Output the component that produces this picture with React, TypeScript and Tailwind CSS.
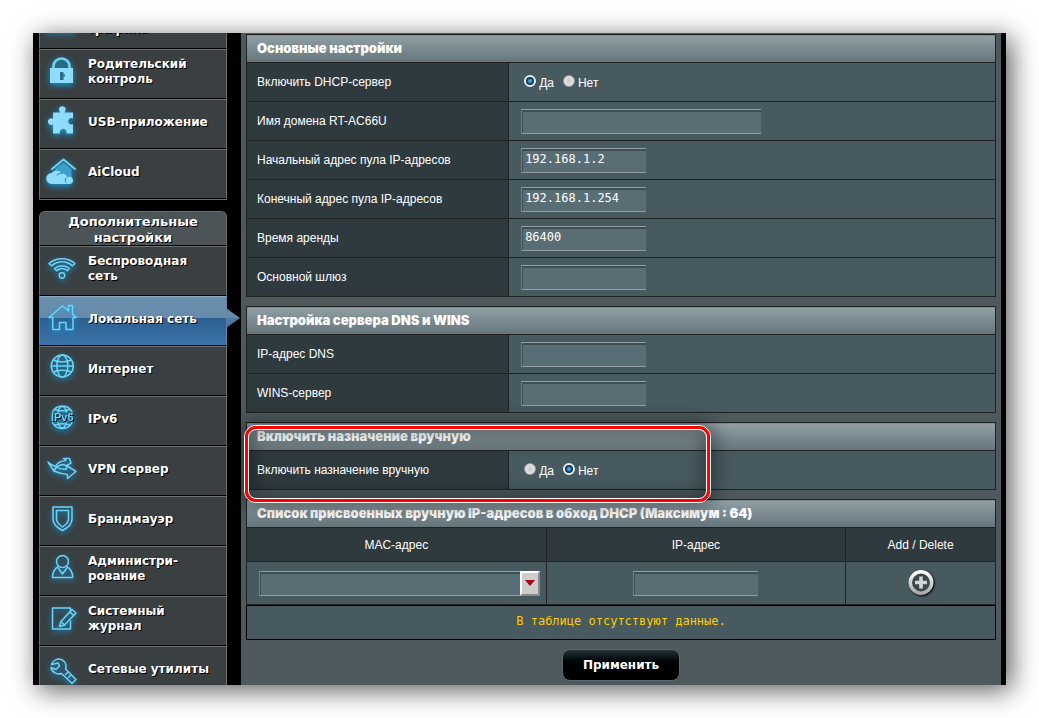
import { FC, ReactNode, useState } from 'react';

interface MenuEntry {
    label: string[];
    icon: ReactNode;
    active?: boolean;
}

const Glyph: FC<{ children: ReactNode; solid?: boolean }> = ({ children, solid }) => (
    <svg
        viewBox="0 0 36 36"
        className="w-9 h-9 shrink-0 overflow-visible drop-shadow-[0_2px_3px_#0f9ad6]"
        fill={solid ? '#8fdcfa' : 'none'}
        stroke={solid ? 'none' : '#6fd3f7'}
        strokeWidth={1.5}
        strokeLinejoin="round"
        strokeLinecap="round"
        aria-hidden="true"
    >
        {children}
    </svg>
);

const GENERAL_MENU: MenuEntry[] = [
    {
        label: ['\u00a0', 'трафика'],
        icon: (
            <Glyph solid>
                <path d="M4 18h5v10H4zM11 10h5v18h-5zM18 14h5v14h-5zM25 6h5v22h-5z" fill="#2a7fa5" />
            </Glyph>
        ),
    },
    {
        label: ['Родительский', 'контроль'],
        icon: (
            <Glyph solid>
                <path d="M9.500 14V12a8 7.500 0 0 1 16 0V14" fill="#2b6a84" stroke="#6fd3f7" strokeWidth="2.600" />
                <path d="M6 14H29V29H6Z" />
                <path d="M16 18h3.500v2.500H21v2h-1.500V26H16Z" fill="#2a6d8b" />
            </Glyph>
        ),
    },
    {
        label: ['USB-приложение'],
        icon: (
            <Glyph solid>
                <path d="M9 8.500H16.200C15.500 7.600 15 6.500 15 5.500a3.300 3.300 0 0 1 6.600 0c0 1-.5 2.100-1.200 3H29V14.500a3.200 3.200 0 1 0 0 5.500V29.500H22.200a3.300 3.300 0 1 0-6 0H9V20.500a3.300 3.300 0 1 1 0-5.600Z" />
            </Glyph>
        ),
    },
    {
        label: ['AiCloud'],
        icon: (
            <Glyph solid>
                <path d="M19.500 8.500L27.500 15V25H11V15Z" fill="#3d9fc9" />
                <path d="M8 15L19.500 5.500L31 15" fill="none" stroke="#6fd3f7" strokeWidth="2" />
                <path d="M8 30a5.500 5.500 0 0 1-.5-11 6 6 0 0 1 5-2.500c3 0 4 1.500 5 3 4 0 6 2.500 5.500 4a3.700 3.700 0 1 1 3 6.500Z" />
                <path d="M13 21c1.500-1.500 3-1.500 4.500-1.500M22 24c-1 1.500-1 3 0 4.500" fill="none" stroke="#2a7fa5" strokeWidth="1" />
            </Glyph>
        ),
    },
];

const ADVANCED_MENU: MenuEntry[] = [
    {
        label: ['Беспроводная', 'сеть'],
        icon: (
            <Glyph>
                <path d="M5 12.500C12 6 24 6 31 12.500L28.500 14.800C22 9.500 14 9.500 7.500 14.800Z" />
                <path d="M10.500 17.500C15 13.800 21 13.800 25.500 17.500L23.300 19.700C20 17 16 17 12.700 19.700Z" />
                <circle cx="18" cy="24.500" r="2.700" />
            </Glyph>
        ),
    },
    {
        label: ['Локальная сеть'],
        active: true,
        icon: (
            <Glyph>
                <path d="M8.700 16.500H5L18.300 5L24.500 10V4.500H28.500V13.200L32.500 16.500H29V28.500H22V21.500H15.500V28.500H8.700Z" />
            </Glyph>
        ),
    },
    {
        label: ['Интернет'],
        icon: (
            <Glyph>
                <circle cx="18.300" cy="15" r="11" />
                <ellipse cx="18.300" cy="15" rx="5.500" ry="11" />
                <path d="M7.500 15H29.100M9.500 9C14 11.500 22.500 11.500 27.100 9M9.500 21C14 18.500 22.500 18.500 27.100 21" />
            </Glyph>
        ),
    },
    {
        label: ['IPv6'],
        icon: (
            <Glyph>
                <path d="M8.500 11A11 11 0 0 1 28.100 11M8.500 21.500A11 11 0 0 0 28.100 21.500M14 11C15 7.500 16.500 5.500 18.300 5.500S21.600 7.500 22.600 11M14 21.500C15 25 16.500 27 18.300 27S21.600 25 22.600 21.500M11 8.500C15 10 21.600 10 25.600 8.500M11 24C15 22.500 21.600 22.500 25.600 24" />
                <text
                    x="18.300"
                    y="20"
                    textAnchor="middle"
                    fontSize="11"
                    className="font-['Liberation_Sans'] font-bold"
                    fill="#6fd3f7"
                    stroke="none"
                >
                    IPv6
                </text>
            </Glyph>
        ),
    },
    {
        label: ['VPN сервер'],
        icon: (
            <Glyph>
                <path d="M4 11L10 20C12 15.500 15 13.500 20 13.500L22 15L27 12L25.500 7.500L19.500 7.500L22 9.500C16 10 13 12 11.500 15.500C9 14.500 6 13 4 11Z" />
                <path d="M12.500 16C16 18.500 19 18.500 22.500 18V14.500L32 20.500L23.500 27.500V23.500C17 23 13.500 21.500 10 20" />
            </Glyph>
        ),
    },
    {
        label: ['Брандмауэр'],
        icon: (
            <Glyph>
                <path d="M9 6H28V18C28 23 23.500 27 18.500 29.500C13.500 27 9 23 9 18Z" />
                <path d="M12.500 9.500H24.500V18C24.500 21 21.500 24 18.500 26C15.500 24 12.500 21 12.500 18Z" />
            </Glyph>
        ),
    },
    {
        label: ['Администри-', 'рование'],
        icon: (
            <Glyph>
                <path d="M14.500 15.500C10.500 17.500 8.500 21 8.500 26.500H28.700C28.700 21 26.500 17.500 22.500 15.500" />
                <circle cx="18.500" cy="10.500" r="6" />
                <path d="M14.500 17.500L18.500 23L22.500 17.500" />
            </Glyph>
        ),
    },
    {
        label: ['Системный', 'журнал'],
        icon: (
            <Glyph>
                <path d="M26.500 20V28H8.500V7H26.500V9.500" />
                <path d="M15.500 25.500L17 20.500L28 8.500L32 12L20.500 24Z" />
                <path d="M17 20.500L20.500 24M25.800 10.800L29.500 14.500" />
            </Glyph>
        ),
    },
    {
        label: ['Сетевые утилиты'],
        icon: (
            <Glyph>
                <path d="M10.500 9.500C14 7 19 8 21 11.500C22.200 13.500 22.300 16 21.500 18L32 28.500L28 32.500L17.500 22.500C13 24 8 21.500 7 16.500L12 18.500L15.500 15L14 12L7.500 13.500C8 12 9 10.500 10.500 9.500Z" />
                <path d="M21.500 23.500L23.500 21.500M24.500 26.500L26.500 24.500" />
            </Glyph>
        ),
    },
];

const MenuItem: FC<MenuEntry> = ({ label, icon, active }) => (
    <li
        className={`relative h-[50px] border-x border-t border-b border-b-black ${
            active
                ? 'border-x-[#5b86ab] border-t-[#8aa9c2] bg-linear-to-b from-[#6d91b0] via-[#2d6090] via-45% to-[#3b74aa]'
                : 'border-x-[#6b7071] border-t-[#6b7071] bg-[#3a3f41]'
        }`}
    >
        {active && <span className="absolute inset-x-0 top-0 h-[21px] bg-linear-to-b from-[#6b8fae] to-[#668bab]" />}
        <a
            href="#"
            className="relative flex h-full items-center gap-2 pl-1 pb-1 text-xs leading-[15px] font-bold text-white [text-shadow:1px_1px_0_#000]"
        >
            {icon}
            <span className="whitespace-nowrap">
                {label.map(line => (
                    <span key={line} className="block">{line}</span>
                ))}
            </span>
        </a>
        {active && (
            <svg viewBox="0 0 14 20" className="absolute left-full top-[11px] h-5 w-3.5" aria-hidden="true">
                <path d="M0 0L14 10H0Z" fill="#668bab" />
                <path d="M0 20L14 10H0Z" fill="#4f7ba3" />
            </svg>
        )}
    </li>
);

const FIELD =
    "h-[25px] border-y border-l border-y-[#929ea1] border-l-[#6f7d82] bg-[#596d74] px-[3px] pb-0.5 font-['DejaVu_Sans_Mono',monospace] text-xs text-white shadow-[inset_1px_2px_0_#3f4e53] outline-none";

const TextField: FC<{ id: string; value?: string; wide?: boolean; label?: string }> = ({ id, value = '', wide, label }) => (
    <input
        id={id}
        type="text"
        defaultValue={value}
        aria-label={label}
        className={`${FIELD} block ${wide ? 'w-60' : 'w-[125px]'}`}
    />
);

const YesNo: FC<{ name: string; initial: boolean }> = ({ name, initial }) => {
    const [value, setValue] = useState(initial);

    return (
        <div className="flex items-center gap-[9px] pl-[3px]">
            {[true, false].map(option => (
                <label key={String(option)} className="flex items-center gap-[3px]">
                    <input
                        type="radio"
                        name={name}
                        checked={value === option}
                        onChange={() => setValue(option)}
                        className="mb-[3px] size-3 appearance-none rounded-full border border-[#8e979a] bg-radial from-[#c9c9c9] to-[#f4f4f4] checked:border-2 checked:border-[#e8eef0] checked:from-[#4fb8ee] checked:from-10% checked:to-[#0b2c4c] checked:to-60%"
                    />
                    <span className="pt-0.5">{option ? 'Да' : 'Нет'}</span>
                </label>
            ))}
        </div>
    );
};

const Heading: FC<{ children: ReactNode; span: number }> = ({ children, span }) => (
    <thead>
        <tr>
            <th
                colSpan={span}
                className="h-7 border border-[#222] bg-linear-to-b from-[#91a0a5] to-[#64757b] px-2.5 pb-0.5 text-left font-['Inter',sans-serif] text-[13px] leading-4 font-black"
            >
                {children}
            </th>
        </tr>
    </thead>
);

const Section: FC<{ title: string; children: ReactNode }> = ({ title, children }) => (
    <table className="w-full table-fixed border-collapse">
        <colgroup>
            <col className="w-[35%]" />
            <col />
        </colgroup>
        <Heading span={2}>{title}</Heading>
        <tbody>{children}</tbody>
    </table>
);

const Row: FC<{ label: string; htmlFor?: string; children: ReactNode }> = ({ label, htmlFor, children }) => (
    <tr>
        <th scope="row" className="h-[39px] border border-[#222] bg-[#2f3a3e] p-0 px-2.5 text-left font-normal">
            {htmlFor ? <label htmlFor={htmlFor}>{label}</label> : label}
        </th>
        <td className="border border-[#222] bg-[#475a5f] p-0 pl-3">{children}</td>
    </tr>
);

const ReservationTable: FC = () => (
    <div>
        <table className="w-full table-fixed border-collapse text-center">
            <colgroup>
                <col className="w-[40%]" />
                <col className="w-[40%]" />
                <col className="w-[20%]" />
            </colgroup>
            <Heading span={3}>Список присвоенных вручную IP-адресов в обход DHCP (Максимум : 64)</Heading>
            <tbody>
                <tr className="bg-[#2f3a3e]">
                    {['MAC-адрес', 'IP-адрес', 'Add / Delete'].map(column => (
                        <th key={column} scope="col" className="h-[34px] border border-[#222] p-0 font-normal">
                            {column}
                        </th>
                    ))}
                </tr>
                <tr className="bg-[#475a5f]">
                    <td className="h-[43px] border border-[#222] py-0 pl-3 pr-1.5">
                        <div className="flex">
                            <input type="text" aria-label="MAC-адрес" className={`${FIELD} min-w-0 flex-1`} />
                            <button
                                type="button"
                                aria-label="Выбрать клиента"
                                className="flex w-5 items-center justify-center border-2 border-t-white border-l-white border-r-[#8a8a8a] border-b-[#8a8a8a] bg-[#cdcdcd]"
                            >
                                <svg viewBox="0 0 10 6" className="h-1.5 w-2.5" aria-hidden="true">
                                    <path d="M0 0H10L5 6Z" fill="#a8000e" />
                                </svg>
                            </button>
                        </div>
                    </td>
                    <td className="border border-[#222] p-0">
                        <div className="flex justify-center">
                            <TextField id="reserved-ip" label="IP-адрес" />
                        </div>
                    </td>
                    <td className="border border-[#222] p-0">
                        <button type="button" aria-label="Add" className="mx-auto block size-7">
                            <svg viewBox="0 0 28 28" className="size-7 drop-shadow-[1px_1px_1px_#000]" aria-hidden="true">
                                <defs>
                                    <linearGradient id="add-metal" x1="0" y1="0" x2="0" y2="1">
                                        <stop offset="0" stopColor="#ffffff" />
                                        <stop offset="1" stopColor="#a9a9a9" />
                                    </linearGradient>
                                </defs>
                                <circle cx="14" cy="13.500" r="10.700" fill="#3a484c" stroke="url(#add-metal)" strokeWidth="3.500" />
                                <path d="M12.200 7.500H15.800V11.700H20V15.300H15.800V19.500H12.200V15.300H8V11.700H12.200Z" fill="#d6d6d6" />
                            </svg>
                        </button>
                    </td>
                </tr>
            </tbody>
        </table>
        <p className="flex h-[35px] items-center justify-center border border-black bg-[#475a5f] pb-1 font-['DejaVu_Sans_Mono',monospace] text-xs text-[#fc0]">
            В таблице отсутствуют данные.
        </p>
    </div>
);

const App: FC = () => (
    <div className="h-screen overflow-hidden bg-white p-[33px]">
        <div className="h-full shadow-[5px_5px_25px_rgba(0,0,0,0.65)]">
            <div className="flex h-full overflow-hidden bg-black pl-1.5 pr-[5px]">
                {/* Navigation */}
                <nav className="-mt-[34px] w-[202px] shrink-0 pr-3.5 font-['DejaVu_Sans',Verdana,sans-serif]">
                    <ul className="border-b border-[#6b7071]">
                        {GENERAL_MENU.map(entry => <MenuItem key={entry.label.join()} {...entry} />)}
                    </ul>
                    <h2 className="mt-[11px] h-[35px] rounded-t-md border border-[#6b7071] border-b-black bg-[#4c5458] px-4 pt-0.5 text-center text-[13px] leading-4 font-bold text-white [text-shadow:1px_1px_0_#000]">
                        Дополнительные настройки
                    </h2>
                    <ul>
                        {ADVANCED_MENU.map(entry => <MenuItem key={entry.label.join()} {...entry} />)}
                    </ul>
                </nav>

                {/* Settings */}
                <main className="min-w-0 flex-1 bg-[#4d595d] px-[5px] pt-px font-['Liberation_Sans',Arial,sans-serif] text-xs text-white">
                    <form className="flex flex-col gap-[9px]" onSubmit={e => e.preventDefault()}>
                        <Section title="Основные настройки">
                            <Row label="Включить DHCP-сервер"><YesNo name="dhcp" initial={true} /></Row>
                            <Row label="Имя домена RT-AC66U" htmlFor="domain"><TextField id="domain" wide /></Row>
                            <Row label="Начальный адрес пула IP-адресов" htmlFor="pool-start">
                                <TextField id="pool-start" value="192.168.1.2" />
                            </Row>
                            <Row label="Конечный адрес пула IP-адресов" htmlFor="pool-end">
                                <TextField id="pool-end" value="192.168.1.254" />
                            </Row>
                            <Row label="Время аренды" htmlFor="lease"><TextField id="lease" value="86400" /></Row>
                            <Row label="Основной шлюз" htmlFor="gateway"><TextField id="gateway" /></Row>
                        </Section>

                        <Section title="Настройка сервера DNS и WINS">
                            <Row label="IP-адрес DNS" htmlFor="dns"><TextField id="dns" /></Row>
                            <Row label="WINS-сервер" htmlFor="wins"><TextField id="wins" /></Row>
                        </Section>

                        <div className="relative">
                            <Section title="Включить назначение вручную">
                                <Row label="Включить назначение вручную"><YesNo name="manual" initial={false} /></Row>
                            </Section>
                            {/* Marker around the manual assignment switch */}
                            <div className="pointer-events-none absolute -left-0.5 top-[3px] z-10 h-[78px] w-[467px] rounded-xl border border-white shadow-[0_0_18px_4px_rgba(0,0,0,0.4)]">
                                <div className="h-full rounded-[11px] border-3 border-[#f00]">
                                    <div className="h-full rounded-lg border border-white shadow-[inset_0_0_18px_4px_rgba(0,0,0,0.35)]" />
                                </div>
                            </div>
                        </div>

                        <ReservationTable />

                        <button
                            type="submit"
                            className="mx-auto h-8 w-[118px] rounded-lg border border-[#5c686c] bg-linear-to-b from-[#22343a] to-black to-60% font-['DejaVu_Sans',Verdana,sans-serif] text-xs font-bold"
                        >
                            Применить
                        </button>
                    </form>
                </main>
            </div>
        </div>
    </div>
);

export default App;
